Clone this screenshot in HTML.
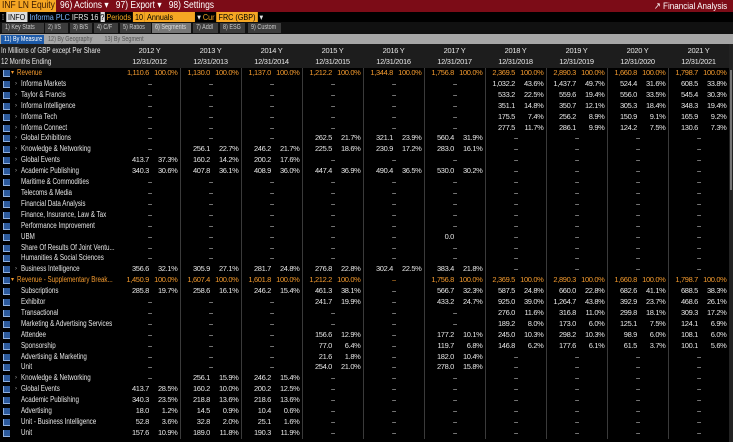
<!DOCTYPE html>
<html><head><meta charset="utf-8"><style>
*{margin:0;padding:0;box-sizing:border-box}
body{width:733px;height:442px;background:#000;overflow:hidden;font-family:"Liberation Sans Narrow","Liberation Sans",sans-serif;font-size:8px;color:#e6e6e6;position:relative}
.a{position:absolute;white-space:nowrap}
.sx{display:inline-block;transform:scaleX(.78);transform-origin:left center}
.sy{display:inline-block;transform:scaleX(.85);transform-origin:left center}
#top{left:0;top:0;width:733px;height:12px;background:#7c0c17}
#r2{left:0;top:12px;width:733px;height:10px;background:#000}
#tabs{left:0;top:22px;width:733px;height:12px;background:#111}
.tab{top:23px;height:10px;background:#3c3c3c;color:#ccc;font-size:7px;line-height:10px;padding-left:3px}
#bm{left:0;top:34px;width:733px;height:10px;background:#a6a6a6}
#hd{left:0;top:44px;width:733px;height:24px;background:#1d1d1d}
.hy{font-size:7.5px;letter-spacing:-.3px}
table{position:absolute;left:0;top:68px;border-collapse:collapse;table-layout:fixed;width:729px}
td{height:10.9px;line-height:10.9px;padding:0;text-align:right;overflow:hidden;white-space:nowrap;font-size:7.5px;letter-spacing:-.35px}
td.l{text-align:left;position:relative;letter-spacing:0;font-size:8px}
td.n{padding-right:3px}
td.p{padding-right:2px;border-right:1px solid #3a3a3a}
td.m{padding-right:0}
.o td{color:#f39a2e}
.ic{position:absolute;left:3px;top:2px;width:7px;height:7px;background:#2c5a9c;border-left:1px solid #8fb0e0;border-bottom:1px solid #8fb0e0}
.lb{position:absolute;left:21px;top:0}
.lb0{position:absolute;left:17px;top:0}
.ar{position:absolute;left:15px;top:0;color:#aaa;font-size:6px}
.ar0{position:absolute;left:11px;top:0;font-size:6px}
</style></head><body>
<div id="top" class="a"></div>
<div class="a" style="left:0;top:0;width:56px;height:12px;background:#f5a623;color:#3a1a00;font-size:10px;line-height:12px;padding-left:2px"><span class="sy">INF LN Equity</span></div>
<div class="a" style="left:60px;top:0;height:12px;line-height:12px;font-size:10px;color:#fff"><span class="sy">96) Actions ▾&nbsp;&nbsp; 97) Export ▾&nbsp;&nbsp; 98) Settings</span></div>
<div class="a" style="left:654px;top:1px;height:11px;line-height:11px;font-size:9.5px;color:#fff"><span class="sy">↗ Financial Analysis</span></div>
<div id="r2" class="a"></div>
<div class="a" style="left:2px;top:12px;line-height:10px;font-size:8.5px"><span class="sy">⁞ <span style="background:#ddd;color:#000">&nbsp;INFO&nbsp;</span> <span style="color:#7ab8ff">Informa PLC</span> IFRS 16 <span style="background:#ddd;color:#000">?</span> <span style="color:#f5a623">Periods</span> <span style="background:#f5a623;color:#000">&nbsp;10&nbsp;</span><span style="background:#f5a623;color:#000">&nbsp;Annuals&nbsp;&nbsp;&nbsp;&nbsp;&nbsp;&nbsp;&nbsp;&nbsp;&nbsp;&nbsp;&nbsp;</span> ▾ <span style="color:#f5a623">Cur</span> <span style="background:#f5a623;color:#000">&nbsp;FRC (GBP)&nbsp;</span> ▾</span></div>
<div id="tabs" class="a"></div>
<div class="tab a" style="left:2px;width:42px"><span class="sx">1) Key Stats</span></div>
<div class="tab a" style="left:45px;width:23px"><span class="sx">2) I/S</span></div>
<div class="tab a" style="left:70px;width:22px"><span class="sx">3) B/S</span></div>
<div class="tab a" style="left:94px;width:24px"><span class="sx">4) C/F</span></div>
<div class="tab a" style="left:120px;width:31px"><span class="sx">5) Ratios</span></div>
<div class="tab a" style="left:152px;width:39px;background:#777;color:#ddd"><span class="sx">6) Segments</span></div>
<div class="tab a" style="left:193px;width:25px"><span class="sx">7) Addl</span></div>
<div class="tab a" style="left:220px;width:25px"><span class="sx">8) ESG</span></div>
<div class="tab a" style="left:248px;width:33px"><span class="sx">9) Custom</span></div>
<div id="bm" class="a"></div>
<div class="a" style="left:1px;top:35px;width:43px;height:9px;background:#1d5aa8;color:#fff;font-size:7px;line-height:9px;padding-left:3px"><span class="sx">11) By Measure</span></div>
<div class="a" style="left:48px;top:35px;font-size:7px;line-height:9px;color:#555"><span class="sx">12) By Geography &nbsp;&nbsp;&nbsp;&nbsp;&nbsp;&nbsp; 13) By Segment</span></div>
<div id="hd" class="a"></div>
<div class="a" style="left:1px;top:45px;line-height:11px"><span class="sx">In Millions of GBP except Per Share</span></div>
<div class="a" style="left:1px;top:56px;line-height:11px"><span class="sx">12 Months Ending</span></div>
<div class="a hy" style="left:119px;top:45px;width:610px;line-height:11px;display:flex;text-align:center">
<div style="width:61px">2012 Y</div><div style="width:61px">2013 Y</div><div style="width:61px">2014 Y</div><div style="width:61px">2015 Y</div><div style="width:61px">2016 Y</div><div style="width:61px">2017 Y</div><div style="width:61px">2018 Y</div><div style="width:61px">2019 Y</div><div style="width:61px">2020 Y</div><div style="width:61px">2021 Y</div></div>
<div class="a hy" style="left:119px;top:56px;width:610px;line-height:11px;display:flex;text-align:center">
<div style="width:61px">12/31/2012</div><div style="width:61px">12/31/2013</div><div style="width:61px">12/31/2014</div><div style="width:61px">12/31/2015</div><div style="width:61px">12/31/2016</div><div style="width:61px">12/31/2017</div><div style="width:61px">12/31/2018</div><div style="width:61px">12/31/2019</div><div style="width:61px">12/31/2020</div><div style="width:61px">12/31/2021</div></div>
<table>
<colgroup><col style="width:119px"><col style="width:33px"><col style="width:28px"><col style="width:33px"><col style="width:28px"><col style="width:33px"><col style="width:28px"><col style="width:33px"><col style="width:28px"><col style="width:33px"><col style="width:28px"><col style="width:33px"><col style="width:28px"><col style="width:33px"><col style="width:28px"><col style="width:33px"><col style="width:28px"><col style="width:33px"><col style="width:28px"><col style="width:33px"><col style="width:28px"></colgroup>
<tr class="o"><td class="l"><i class="ic"></i><span class="ar0">▾</span><span class="lb0 sx">Revenue</span></td><td class="n">1,110.6</td><td class="p">100.0%</td><td class="n">1,130.0</td><td class="p">100.0%</td><td class="n">1,137.0</td><td class="p">100.0%</td><td class="n">1,212.2</td><td class="p">100.0%</td><td class="n">1,344.8</td><td class="p">100.0%</td><td class="n">1,756.8</td><td class="p">100.0%</td><td class="n">2,369.5</td><td class="p">100.0%</td><td class="n">2,890.3</td><td class="p">100.0%</td><td class="n">1,660.8</td><td class="p">100.0%</td><td class="n">1,798.7</td><td class="p">100.0%</td></tr>
<tr><td class="l"><i class="ic"></i><span class="ar">›</span><span class="lb sx">Informa Markets</span></td><td class="m">–</td><td class="p"></td><td class="m">–</td><td class="p"></td><td class="m">–</td><td class="p"></td><td class="m">–</td><td class="p"></td><td class="m">–</td><td class="p"></td><td class="m">–</td><td class="p"></td><td class="n">1,032.2</td><td class="p">43.6%</td><td class="n">1,437.7</td><td class="p">49.7%</td><td class="n">524.4</td><td class="p">31.6%</td><td class="n">608.5</td><td class="p">33.8%</td></tr>
<tr><td class="l"><i class="ic"></i><span class="ar">›</span><span class="lb sx">Taylor &amp; Francis</span></td><td class="m">–</td><td class="p"></td><td class="m">–</td><td class="p"></td><td class="m">–</td><td class="p"></td><td class="m">–</td><td class="p"></td><td class="m">–</td><td class="p"></td><td class="m">–</td><td class="p"></td><td class="n">533.2</td><td class="p">22.5%</td><td class="n">559.6</td><td class="p">19.4%</td><td class="n">556.0</td><td class="p">33.5%</td><td class="n">545.4</td><td class="p">30.3%</td></tr>
<tr><td class="l"><i class="ic"></i><span class="ar">›</span><span class="lb sx">Informa Intelligence</span></td><td class="m">–</td><td class="p"></td><td class="m">–</td><td class="p"></td><td class="m">–</td><td class="p"></td><td class="m">–</td><td class="p"></td><td class="m">–</td><td class="p"></td><td class="m">–</td><td class="p"></td><td class="n">351.1</td><td class="p">14.8%</td><td class="n">350.7</td><td class="p">12.1%</td><td class="n">305.3</td><td class="p">18.4%</td><td class="n">348.3</td><td class="p">19.4%</td></tr>
<tr><td class="l"><i class="ic"></i><span class="ar">›</span><span class="lb sx">Informa Tech</span></td><td class="m">–</td><td class="p"></td><td class="m">–</td><td class="p"></td><td class="m">–</td><td class="p"></td><td class="m">–</td><td class="p"></td><td class="m">–</td><td class="p"></td><td class="m">–</td><td class="p"></td><td class="n">175.5</td><td class="p">7.4%</td><td class="n">256.2</td><td class="p">8.9%</td><td class="n">150.9</td><td class="p">9.1%</td><td class="n">165.9</td><td class="p">9.2%</td></tr>
<tr><td class="l"><i class="ic"></i><span class="ar">›</span><span class="lb sx">Informa Connect</span></td><td class="m">–</td><td class="p"></td><td class="m">–</td><td class="p"></td><td class="m">–</td><td class="p"></td><td class="m">–</td><td class="p"></td><td class="m">–</td><td class="p"></td><td class="m">–</td><td class="p"></td><td class="n">277.5</td><td class="p">11.7%</td><td class="n">286.1</td><td class="p">9.9%</td><td class="n">124.2</td><td class="p">7.5%</td><td class="n">130.6</td><td class="p">7.3%</td></tr>
<tr><td class="l"><i class="ic"></i><span class="ar">›</span><span class="lb sx">Global Exhibitions</span></td><td class="m">–</td><td class="p"></td><td class="m">–</td><td class="p"></td><td class="m">–</td><td class="p"></td><td class="n">262.5</td><td class="p">21.7%</td><td class="n">321.1</td><td class="p">23.9%</td><td class="n">560.4</td><td class="p">31.9%</td><td class="m">–</td><td class="p"></td><td class="m">–</td><td class="p"></td><td class="m">–</td><td class="p"></td><td class="m">–</td><td class="p"></td></tr>
<tr><td class="l"><i class="ic"></i><span class="ar">›</span><span class="lb sx">Knowledge &amp; Networking</span></td><td class="m">–</td><td class="p"></td><td class="n">256.1</td><td class="p">22.7%</td><td class="n">246.2</td><td class="p">21.7%</td><td class="n">225.5</td><td class="p">18.6%</td><td class="n">230.9</td><td class="p">17.2%</td><td class="n">283.0</td><td class="p">16.1%</td><td class="m">–</td><td class="p"></td><td class="m">–</td><td class="p"></td><td class="m">–</td><td class="p"></td><td class="m">–</td><td class="p"></td></tr>
<tr><td class="l"><i class="ic"></i><span class="ar">›</span><span class="lb sx">Global Events</span></td><td class="n">413.7</td><td class="p">37.3%</td><td class="n">160.2</td><td class="p">14.2%</td><td class="n">200.2</td><td class="p">17.6%</td><td class="m">–</td><td class="p"></td><td class="m">–</td><td class="p"></td><td class="m">–</td><td class="p"></td><td class="m">–</td><td class="p"></td><td class="m">–</td><td class="p"></td><td class="m">–</td><td class="p"></td><td class="m">–</td><td class="p"></td></tr>
<tr><td class="l"><i class="ic"></i><span class="ar">›</span><span class="lb sx">Academic Publishing</span></td><td class="n">340.3</td><td class="p">30.6%</td><td class="n">407.8</td><td class="p">36.1%</td><td class="n">408.9</td><td class="p">36.0%</td><td class="n">447.4</td><td class="p">36.9%</td><td class="n">490.4</td><td class="p">36.5%</td><td class="n">530.0</td><td class="p">30.2%</td><td class="m">–</td><td class="p"></td><td class="m">–</td><td class="p"></td><td class="m">–</td><td class="p"></td><td class="m">–</td><td class="p"></td></tr>
<tr><td class="l"><i class="ic"></i><span class="lb sx">Maritime &amp; Commodities</span></td><td class="m">–</td><td class="p"></td><td class="m">–</td><td class="p"></td><td class="m">–</td><td class="p"></td><td class="m">–</td><td class="p"></td><td class="m">–</td><td class="p"></td><td class="m">–</td><td class="p"></td><td class="m">–</td><td class="p"></td><td class="m">–</td><td class="p"></td><td class="m">–</td><td class="p"></td><td class="m">–</td><td class="p"></td></tr>
<tr><td class="l"><i class="ic"></i><span class="lb sx">Telecoms &amp; Media</span></td><td class="m">–</td><td class="p"></td><td class="m">–</td><td class="p"></td><td class="m">–</td><td class="p"></td><td class="m">–</td><td class="p"></td><td class="m">–</td><td class="p"></td><td class="m">–</td><td class="p"></td><td class="m">–</td><td class="p"></td><td class="m">–</td><td class="p"></td><td class="m">–</td><td class="p"></td><td class="m">–</td><td class="p"></td></tr>
<tr><td class="l"><i class="ic"></i><span class="lb sx">Financial Data Analysis</span></td><td class="m">–</td><td class="p"></td><td class="m">–</td><td class="p"></td><td class="m">–</td><td class="p"></td><td class="m">–</td><td class="p"></td><td class="m">–</td><td class="p"></td><td class="m">–</td><td class="p"></td><td class="m">–</td><td class="p"></td><td class="m">–</td><td class="p"></td><td class="m">–</td><td class="p"></td><td class="m">–</td><td class="p"></td></tr>
<tr><td class="l"><i class="ic"></i><span class="lb sx">Finance, Insurance, Law &amp; Tax</span></td><td class="m">–</td><td class="p"></td><td class="m">–</td><td class="p"></td><td class="m">–</td><td class="p"></td><td class="m">–</td><td class="p"></td><td class="m">–</td><td class="p"></td><td class="m">–</td><td class="p"></td><td class="m">–</td><td class="p"></td><td class="m">–</td><td class="p"></td><td class="m">–</td><td class="p"></td><td class="m">–</td><td class="p"></td></tr>
<tr><td class="l"><i class="ic"></i><span class="lb sx">Performance Improvement</span></td><td class="m">–</td><td class="p"></td><td class="m">–</td><td class="p"></td><td class="m">–</td><td class="p"></td><td class="m">–</td><td class="p"></td><td class="m">–</td><td class="p"></td><td class="m">–</td><td class="p"></td><td class="m">–</td><td class="p"></td><td class="m">–</td><td class="p"></td><td class="m">–</td><td class="p"></td><td class="m">–</td><td class="p"></td></tr>
<tr><td class="l"><i class="ic"></i><span class="lb sx">UBM</span></td><td class="m">–</td><td class="p"></td><td class="m">–</td><td class="p"></td><td class="m">–</td><td class="p"></td><td class="m">–</td><td class="p"></td><td class="m">–</td><td class="p"></td><td class="n">0.0</td><td class="p"></td><td class="m">–</td><td class="p"></td><td class="m">–</td><td class="p"></td><td class="m">–</td><td class="p"></td><td class="m">–</td><td class="p"></td></tr>
<tr><td class="l"><i class="ic"></i><span class="lb sx">Share Of Results Of Joint Ventu...</span></td><td class="m">–</td><td class="p"></td><td class="m">–</td><td class="p"></td><td class="m">–</td><td class="p"></td><td class="m">–</td><td class="p"></td><td class="m">–</td><td class="p"></td><td class="m">–</td><td class="p"></td><td class="m">–</td><td class="p"></td><td class="m">–</td><td class="p"></td><td class="m">–</td><td class="p"></td><td class="m">–</td><td class="p"></td></tr>
<tr><td class="l"><i class="ic"></i><span class="lb sx">Humanities &amp; Social Sciences</span></td><td class="m">–</td><td class="p"></td><td class="m">–</td><td class="p"></td><td class="m">–</td><td class="p"></td><td class="m">–</td><td class="p"></td><td class="m">–</td><td class="p"></td><td class="m">–</td><td class="p"></td><td class="m">–</td><td class="p"></td><td class="m">–</td><td class="p"></td><td class="m">–</td><td class="p"></td><td class="m">–</td><td class="p"></td></tr>
<tr><td class="l"><i class="ic"></i><span class="ar">›</span><span class="lb sx">Business Intelligence</span></td><td class="n">356.6</td><td class="p">32.1%</td><td class="n">305.9</td><td class="p">27.1%</td><td class="n">281.7</td><td class="p">24.8%</td><td class="n">276.8</td><td class="p">22.8%</td><td class="n">302.4</td><td class="p">22.5%</td><td class="n">383.4</td><td class="p">21.8%</td><td class="m">–</td><td class="p"></td><td class="m">–</td><td class="p"></td><td class="m">–</td><td class="p"></td><td class="m">–</td><td class="p"></td></tr>
<tr class="o"><td class="l"><i class="ic"></i><span class="ar0">▾</span><span class="lb0 sx">Revenue - Supplementary Break...</span></td><td class="n">1,450.9</td><td class="p">100.0%</td><td class="n">1,607.4</td><td class="p">100.0%</td><td class="n">1,601.8</td><td class="p">100.0%</td><td class="n">1,212.2</td><td class="p">100.0%</td><td class="m">–</td><td class="p"></td><td class="n">1,756.8</td><td class="p">100.0%</td><td class="n">2,369.5</td><td class="p">100.0%</td><td class="n">2,890.3</td><td class="p">100.0%</td><td class="n">1,660.8</td><td class="p">100.0%</td><td class="n">1,798.7</td><td class="p">100.0%</td></tr>
<tr><td class="l"><i class="ic"></i><span class="lb sx">Subscriptions</span></td><td class="n">285.8</td><td class="p">19.7%</td><td class="n">258.6</td><td class="p">16.1%</td><td class="n">246.2</td><td class="p">15.4%</td><td class="n">461.3</td><td class="p">38.1%</td><td class="m">–</td><td class="p"></td><td class="n">566.7</td><td class="p">32.3%</td><td class="n">587.5</td><td class="p">24.8%</td><td class="n">660.0</td><td class="p">22.8%</td><td class="n">682.6</td><td class="p">41.1%</td><td class="n">688.5</td><td class="p">38.3%</td></tr>
<tr><td class="l"><i class="ic"></i><span class="lb sx">Exhibitor</span></td><td class="m">–</td><td class="p"></td><td class="m">–</td><td class="p"></td><td class="m">–</td><td class="p"></td><td class="n">241.7</td><td class="p">19.9%</td><td class="m">–</td><td class="p"></td><td class="n">433.2</td><td class="p">24.7%</td><td class="n">925.0</td><td class="p">39.0%</td><td class="n">1,264.7</td><td class="p">43.8%</td><td class="n">392.9</td><td class="p">23.7%</td><td class="n">468.6</td><td class="p">26.1%</td></tr>
<tr><td class="l"><i class="ic"></i><span class="lb sx">Transactional</span></td><td class="m">–</td><td class="p"></td><td class="m">–</td><td class="p"></td><td class="m">–</td><td class="p"></td><td class="m">–</td><td class="p"></td><td class="m">–</td><td class="p"></td><td class="m">–</td><td class="p"></td><td class="n">276.0</td><td class="p">11.6%</td><td class="n">316.8</td><td class="p">11.0%</td><td class="n">299.8</td><td class="p">18.1%</td><td class="n">309.3</td><td class="p">17.2%</td></tr>
<tr><td class="l"><i class="ic"></i><span class="lb sx">Marketing &amp; Advertising Services</span></td><td class="m">–</td><td class="p"></td><td class="m">–</td><td class="p"></td><td class="m">–</td><td class="p"></td><td class="m">–</td><td class="p"></td><td class="m">–</td><td class="p"></td><td class="m">–</td><td class="p"></td><td class="n">189.2</td><td class="p">8.0%</td><td class="n">173.0</td><td class="p">6.0%</td><td class="n">125.1</td><td class="p">7.5%</td><td class="n">124.1</td><td class="p">6.9%</td></tr>
<tr><td class="l"><i class="ic"></i><span class="lb sx">Attendee</span></td><td class="m">–</td><td class="p"></td><td class="m">–</td><td class="p"></td><td class="m">–</td><td class="p"></td><td class="n">156.6</td><td class="p">12.9%</td><td class="m">–</td><td class="p"></td><td class="n">177.2</td><td class="p">10.1%</td><td class="n">245.0</td><td class="p">10.3%</td><td class="n">298.2</td><td class="p">10.3%</td><td class="n">98.9</td><td class="p">6.0%</td><td class="n">108.1</td><td class="p">6.0%</td></tr>
<tr><td class="l"><i class="ic"></i><span class="lb sx">Sponsorship</span></td><td class="m">–</td><td class="p"></td><td class="m">–</td><td class="p"></td><td class="m">–</td><td class="p"></td><td class="n">77.0</td><td class="p">6.4%</td><td class="m">–</td><td class="p"></td><td class="n">119.7</td><td class="p">6.8%</td><td class="n">146.8</td><td class="p">6.2%</td><td class="n">177.6</td><td class="p">6.1%</td><td class="n">61.5</td><td class="p">3.7%</td><td class="n">100.1</td><td class="p">5.6%</td></tr>
<tr><td class="l"><i class="ic"></i><span class="lb sx">Advertising &amp; Marketing</span></td><td class="m">–</td><td class="p"></td><td class="m">–</td><td class="p"></td><td class="m">–</td><td class="p"></td><td class="n">21.6</td><td class="p">1.8%</td><td class="m">–</td><td class="p"></td><td class="n">182.0</td><td class="p">10.4%</td><td class="m">–</td><td class="p"></td><td class="m">–</td><td class="p"></td><td class="m">–</td><td class="p"></td><td class="m">–</td><td class="p"></td></tr>
<tr><td class="l"><i class="ic"></i><span class="lb sx">Unit</span></td><td class="m">–</td><td class="p"></td><td class="m">–</td><td class="p"></td><td class="m">–</td><td class="p"></td><td class="n">254.0</td><td class="p">21.0%</td><td class="m">–</td><td class="p"></td><td class="n">278.0</td><td class="p">15.8%</td><td class="m">–</td><td class="p"></td><td class="m">–</td><td class="p"></td><td class="m">–</td><td class="p"></td><td class="m">–</td><td class="p"></td></tr>
<tr><td class="l"><i class="ic"></i><span class="ar">›</span><span class="lb sx">Knowledge &amp; Networking</span></td><td class="m">–</td><td class="p"></td><td class="n">256.1</td><td class="p">15.9%</td><td class="n">246.2</td><td class="p">15.4%</td><td class="m">–</td><td class="p"></td><td class="m">–</td><td class="p"></td><td class="m">–</td><td class="p"></td><td class="m">–</td><td class="p"></td><td class="m">–</td><td class="p"></td><td class="m">–</td><td class="p"></td><td class="m">–</td><td class="p"></td></tr>
<tr><td class="l"><i class="ic"></i><span class="ar">›</span><span class="lb sx">Global Events</span></td><td class="n">413.7</td><td class="p">28.5%</td><td class="n">160.2</td><td class="p">10.0%</td><td class="n">200.2</td><td class="p">12.5%</td><td class="m">–</td><td class="p"></td><td class="m">–</td><td class="p"></td><td class="m">–</td><td class="p"></td><td class="m">–</td><td class="p"></td><td class="m">–</td><td class="p"></td><td class="m">–</td><td class="p"></td><td class="m">–</td><td class="p"></td></tr>
<tr><td class="l"><i class="ic"></i><span class="lb sx">Academic Publishing</span></td><td class="n">340.3</td><td class="p">23.5%</td><td class="n">218.8</td><td class="p">13.6%</td><td class="n">218.6</td><td class="p">13.6%</td><td class="m">–</td><td class="p"></td><td class="m">–</td><td class="p"></td><td class="m">–</td><td class="p"></td><td class="m">–</td><td class="p"></td><td class="m">–</td><td class="p"></td><td class="m">–</td><td class="p"></td><td class="m">–</td><td class="p"></td></tr>
<tr><td class="l"><i class="ic"></i><span class="lb sx">Advertising</span></td><td class="n">18.0</td><td class="p">1.2%</td><td class="n">14.5</td><td class="p">0.9%</td><td class="n">10.4</td><td class="p">0.6%</td><td class="m">–</td><td class="p"></td><td class="m">–</td><td class="p"></td><td class="m">–</td><td class="p"></td><td class="m">–</td><td class="p"></td><td class="m">–</td><td class="p"></td><td class="m">–</td><td class="p"></td><td class="m">–</td><td class="p"></td></tr>
<tr><td class="l"><i class="ic"></i><span class="lb sx">Unit - Business Intelligence</span></td><td class="n">52.8</td><td class="p">3.6%</td><td class="n">32.8</td><td class="p">2.0%</td><td class="n">25.1</td><td class="p">1.6%</td><td class="m">–</td><td class="p"></td><td class="m">–</td><td class="p"></td><td class="m">–</td><td class="p"></td><td class="m">–</td><td class="p"></td><td class="m">–</td><td class="p"></td><td class="m">–</td><td class="p"></td><td class="m">–</td><td class="p"></td></tr>
<tr><td class="l"><i class="ic"></i><span class="lb sx">Unit</span></td><td class="n">157.6</td><td class="p">10.9%</td><td class="n">189.0</td><td class="p">11.8%</td><td class="n">190.3</td><td class="p">11.9%</td><td class="m">–</td><td class="p"></td><td class="m">–</td><td class="p"></td><td class="m">–</td><td class="p"></td><td class="m">–</td><td class="p"></td><td class="m">–</td><td class="p"></td><td class="m">–</td><td class="p"></td><td class="m">–</td><td class="p"></td></tr>
</table>
<div class="a" style="left:729px;top:44px;width:4px;height:398px;background:#222"></div>
<div class="a" style="left:730px;top:70px;width:2px;height:120px;background:#777"></div>
</body></html>
